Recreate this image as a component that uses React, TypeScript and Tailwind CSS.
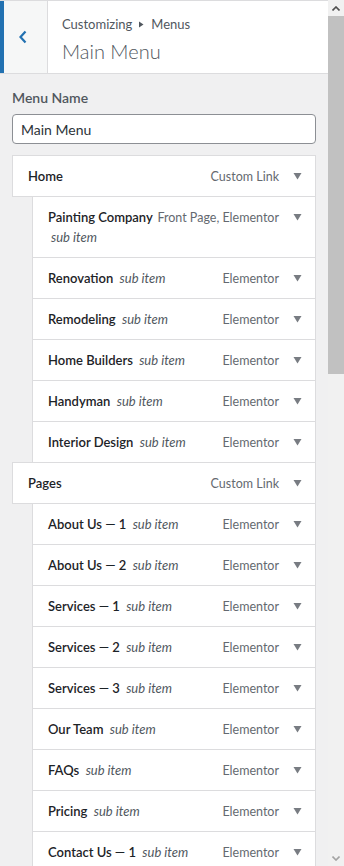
import type { ReactNode } from "react";

type Item = { title: string; type: string; sub?: boolean };

const items: Item[] = [
  { title: "Home", type: "Custom Link" },
  { title: "Painting Company", type: "Front Page, Elementor", sub: true },
  { title: "Renovation", type: "Elementor", sub: true },
  { title: "Remodeling", type: "Elementor", sub: true },
  { title: "Home Builders", type: "Elementor", sub: true },
  { title: "Handyman", type: "Elementor", sub: true },
  { title: "Interior Design", type: "Elementor", sub: true },
  { title: "Pages", type: "Custom Link" },
  { title: "About Us — 1", type: "Elementor", sub: true },
  { title: "About Us — 2", type: "Elementor", sub: true },
  { title: "Services — 1", type: "Elementor", sub: true },
  { title: "Services — 2", type: "Elementor", sub: true },
  { title: "Services — 3", type: "Elementor", sub: true },
  { title: "Our Team", type: "Elementor", sub: true },
  { title: "FAQs", type: "Elementor", sub: true },
  { title: "Pricing", type: "Elementor", sub: true },
  { title: "Contact Us — 1", type: "Elementor", sub: true },
  { title: "Contact Us — 2", type: "Elementor", sub: true },
];

function DownArrow() {
  return (
    <svg width="9" height="7" viewBox="0 0 9 7" className="block">
      <path d="M0.5 0 H8.5 L4.5 6.5 Z" fill="#787c82" />
    </svg>
  );
}

function MenuItem({ item }: { item: Item }) {
  return (
    <li
      className={`-mt-px flex items-start border border-[#dcdcde] bg-white py-[10px] pl-[15px] ${
        item.sub ? "ml-[20px]" : ""
      }`}
    >
      <div className="min-w-0 flex-1 leading-[20px]">
        <span className="whitespace-nowrap font-semibold text-[#1d2327]">{item.title}</span>
        {item.sub && (
          <>
            {" "}
            <span className="ml-[3px] whitespace-nowrap italic text-[#50575e]">sub item</span>
          </>
        )}
      </div>
      <span className="ml-[5px] shrink-0 translate-y-px text-[12.5px] leading-[20px] text-[#646970]">
        {item.type}
      </span>
      <span className="ml-[3px] mr-[3px] flex h-[20px] w-[30px] shrink-0 items-center justify-center">
        <DownArrow />
      </span>
    </li>
  );
}

function Scrollbar() {
  return (
    <div className="flex h-[866px] w-4 shrink-0 flex-col bg-[#f1f1f1]">
      <div className="flex h-4 items-center justify-center">
        <svg width="8" height="5" viewBox="0 0 8 5">
          <path d="M0.5 4.5 L4 1 L7.5 4.5" fill="none" stroke="#505050" strokeWidth="1.6" />
        </svg>
      </div>
      <div className="h-[358px] bg-[#c1c1c1]" />
      <div className="flex-1" />
      <div className="flex h-4 items-center justify-center">
        <svg width="8" height="5" viewBox="0 0 8 5">
          <path d="M0.5 0.5 L4 4 L7.5 0.5" fill="none" stroke="#a3a3a3" strokeWidth="1.6" />
        </svg>
      </div>
    </div>
  );
}

function Panel({ children }: { children: ReactNode }) {
  return <div className="h-[866px] w-[328px] shrink-0 overflow-hidden bg-[#f0f0f1]">{children}</div>;
}

export default function App() {
  return (
    <div
      className="flex h-[866px] w-[344px] overflow-hidden text-[13px]"
      style={{ fontFamily: 'Lato, "Open Sans", sans-serif' }}
    >
      <Panel>
        {/* header */}
        <div className="flex h-[74px] border-b border-t border-[#dcdcde] bg-white">
          <div className="flex w-[48px] shrink-0 items-center border-l-4 border-r border-l-[#2271b1] border-r-[#dcdcde] bg-[#f6f7f7] pl-[14px]">
            <svg width="10" height="14" viewBox="0 0 10 14">
              <path d="M7.5 1.5 L2.5 7 L7.5 12.5" fill="none" stroke="#2271b1" strokeWidth="2.2" />
            </svg>
          </div>
          <div className="flex flex-col pl-[14px] pt-[13px]">
            <div className="flex items-center leading-[20px] text-[#50575e]">
              Customizing
              <svg width="5" height="7" viewBox="0 0 5 7" className="mx-[7px]">
                <path d="M0 0.5 L4.5 3.5 L0 6.5 Z" fill="#50575e" />
              </svg>
              Menus
            </div>
            <div className="mt-[5px] text-[20px] font-light leading-[24px] text-[#50575e]">Main Menu</div>
          </div>
        </div>

        {/* menu name */}
        <div className="px-[12px] pt-[14px]">
          <div className="text-[14px] font-semibold leading-[20px] text-[#50575e]">Menu Name</div>
          <div className="mt-[6px] flex h-[30px] items-center rounded-[4px] border border-[#8c8f94] bg-white px-[8px] text-[14px] text-[#2c3338]">
            Main Menu
          </div>
        </div>

        {/* items */}
        <ul className="mt-[12px] pl-[12px] pr-[12px]">
          {items.map((it) => (
            <MenuItem key={it.title} item={it} />
          ))}
        </ul>
      </Panel>
      <Scrollbar />
    </div>
  );
}
